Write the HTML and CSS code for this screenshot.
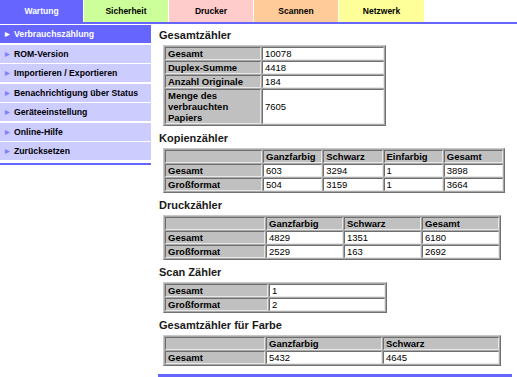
FILE: index.html
```html
<!DOCTYPE html>
<html>
  <head>
    <meta charset="utf-8">
    <title>Wartung - Verbrauchszählung</title>
    <link rel="stylesheet" href="styles.css">
  </head>
  <body>
    <div class="tabs">
      <div class="tab tab-wartung">Wartung</div>
      <div class="tab tab-sicherheit">Sicherheit</div>
      <div class="tab tab-drucker">Drucker</div>
      <div class="tab tab-scannen">Scannen</div>
      <div class="tab tab-netzwerk">Netzwerk</div>
    </div>
    <div class="tabline"></div>

    <div class="layout">
      <div class="side">
        <ul class="menu">
          <li class="active">Verbrauchszählung</li>
          <li>ROM-Version</li>
          <li>Importieren / Exportieren</li>
          <li>Benachrichtigung über Status</li>
          <li>Geräteeinstellung</li>
          <li>Online-Hilfe</li>
          <li>Zurücksetzen</li>
        </ul>
        <div class="side-end"></div>
      </div>

      <div class="main">
        <h2>Gesamtzähler</h2>
        <table class="counter t-total">
          <tr><th>Gesamt</th><td>10078</td></tr>
          <tr><th>Duplex-Summe</th><td>4418</td></tr>
          <tr><th>Anzahl Originale</th><td>184</td></tr>
          <tr><th>Menge des<br>verbrauchten<br>Papiers</th><td>7605</td></tr>
        </table>

        <h2>Kopienzähler</h2>
        <table class="counter t-copy">
          <tr><th></th><th>Ganzfarbig</th><th>Schwarz</th><th>Einfarbig</th><th>Gesamt</th></tr>
          <tr><th>Gesamt</th><td>603</td><td>3294</td><td>1</td><td>3898</td></tr>
          <tr><th>Großformat</th><td>504</td><td>3159</td><td>1</td><td>3664</td></tr>
        </table>

        <h2>Druckzähler</h2>
        <table class="counter t-print">
          <tr><th></th><th>Ganzfarbig</th><th>Schwarz</th><th>Gesamt</th></tr>
          <tr><th>Gesamt</th><td>4829</td><td>1351</td><td>6180</td></tr>
          <tr><th>Großformat</th><td>2529</td><td>163</td><td>2692</td></tr>
        </table>

        <h2>Scan Zähler</h2>
        <table class="counter t-scan">
          <tr><th>Gesamt</th><td>1</td></tr>
          <tr><th>Großformat</th><td>2</td></tr>
        </table>

        <h2>Gesamtzähler für Farbe</h2>
        <table class="counter t-color">
          <tr><th></th><th>Ganzfarbig</th><th>Schwarz</th></tr>
          <tr><th>Gesamt</th><td>5432</td><td>4645</td></tr>
        </table>

        <div class="main-end"></div>
      </div>
    </div>
  </body>
</html>
```
FILE: styles.css
```css
body {
  font-family: "Liberation Sans", Arial, sans-serif;
  margin: 0;
  padding: 0;
  background-color: #ffffff;
  color: #000000;
}

.tabs {
  display: flex;
  height: 22px;
}
.tab {
  width: 84px;
  margin-right: 1px;
  font-size: 8.5px;
  font-weight: bold;
  display: flex;
  align-items: center;
  justify-content: center;
  color: #000000;
}
.tab-wartung {
  background-color: #6666ff;
  color: #ffffff;
  width: 83px;
}
.tab-sicherheit { background-color: #ccff99; }
.tab-drucker { background-color: #ffcccc; }
.tab-scannen { background-color: #ffcc99; }
.tab-netzwerk { background-color: #ffff99; width: 85px; }

.tabline {
  height: 2px;
  background-color: #6666ff;
  margin-bottom: 1px;
}

.layout {
  display: flex;
  align-items: flex-start;
}

.side {
  width: 151px;
}
.menu {
  list-style: none;
  margin: 0;
  padding: 0;
}
.menu li {
  background-color: #ccccff;
  height: 18px;
  line-height: 18px;
  margin-bottom: 1.5px;
  padding-left: 5px;
  font-size: 8.7px;
  font-weight: bold;
  white-space: nowrap;
}
.menu li::before {
  content: "\25B6";
  color: #8080ff;
  font-size: 6px;
  margin-right: 4px;
  vertical-align: 1px;
}
.menu li.active {
  background-color: #6666ff;
  color: #ffffff;
}
.menu li.active::before {
  color: #ffffff;
}
.side-end {
  height: 2px;
  margin-top: 3px;
  background-color: #6666ff;
}

.main {
  flex: 1;
  margin-left: 7px;
  margin-right: 5px;
}
.main h2 {
  font-size: 11px;
  font-weight: bold;
  color: #1a1a1a;
  margin: 0 0 2px 0;
  padding-left: 1px;
  height: 15px;
  line-height: 15px;
}
.main h2:first-child {
  margin-top: 3px;
}

.counter {
  margin: 0 0 5px 5px;
  border-collapse: separate;
  border-spacing: 1px;
  background-color: #a8a8a8;
  border: 1px solid #c8c8c8;
  border-right-color: #707070;
  border-bottom-color: #707070;
  font-size: 9.5px;
  table-layout: fixed;
}
.counter th,
.counter td {
  border: 1px solid #6e6e6e;
  border-right-color: #e8e8e8;
  border-bottom-color: #e8e8e8;
  padding: 0 2px;
  line-height: 11px;
  text-align: left;
  vertical-align: middle;
}
.counter th {
  background-color: #c0c0c0;
  font-weight: bold;
}
.counter td {
  background-color: #ffffff;
  font-weight: normal;
}

.t-total { width: 223px; }
.t-total th { width: 90px; }

.t-copy { width: 342px; }
.t-copy th:first-child { width: 91px; }

.t-print { width: 338px; }
.t-print th:first-child { width: 94px; }

.t-scan { width: 224px; }
.t-scan th { width: 97px; }

.t-color { width: 338px; }
.t-color th:first-child { width: 94px; }

.main-end {
  height: 3px;
  margin-top: 8px;
  background-color: #6666ff;
}
```
